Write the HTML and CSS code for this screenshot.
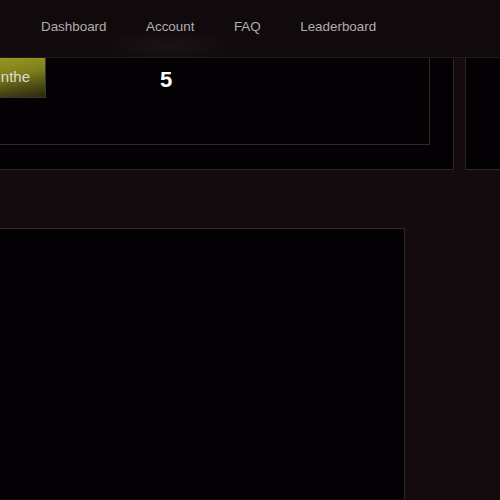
FILE: index.html
```html
<!DOCTYPE html>
<html>
<head>
<meta charset="utf-8">
<link rel="stylesheet" href="styles.css">
</head>
<body>
<header class="topbar">
  <nav class="nav">
    <a class="nav-link" href="#">Dashboard</a>
    <a class="nav-link" href="#">Account</a>
    <a class="nav-link" href="#">FAQ</a>
    <a class="nav-link" href="#">Leaderboard</a>
  </nav>
</header>
<main class="main">
  <section class="top-row">
    <div class="panel panel-a">
      <div class="inner">
        <div class="inner-row">
          <button class="btn">nthe</button>
          <span class="count">5</span>
        </div>
      </div>
    </div>
    <div class="panel panel-b"></div>
  </section>
  <section class="bottom-row">
    <div class="panel panel-c"></div>
  </section>
</main>
</body>
</html>
```
FILE: styles.css
```css
html, body {
  margin: 0;
  padding: 0;
  height: 100%;
  overflow: hidden;
}
body {
  background: #130b0d;
  font-family: "Liberation Sans", Arial, sans-serif;
}
.topbar {
  height: 57px;
  background: radial-gradient(ellipse 70px 18px at 168px 46px, #1a1416 0%, rgba(26,20,22,0) 100%), #100a0c;
  border-bottom: 1px solid #231c1e;
  display: flex;
  align-items: center;
}
.nav {
  display: flex;
  gap: 39.5px;
  padding-left: 41px;
  margin-top: -5px;
}
.nav-link {
  color: #b3adaf;
  font-size: 13.4px;
  text-decoration: none;
}
.main {
  display: flex;
  flex-direction: column;
}
.top-row {
  display: flex;
  gap: 11px;
  height: 112px;
}
.panel {
  background: #030103;
  box-sizing: border-box;
}
.panel-a {
  width: 454px;
  padding: 0 23px 24px 0;
  border-right: 1px solid #2a2527;
  border-bottom: 1px solid #2a2527;
}
.panel-b {
  flex: 1;
  border-left: 1px solid #2a2527;
  border-bottom: 1px solid #2a2527;
}
.inner {
  height: 100%;
  box-sizing: border-box;
  border-right: 1px solid #2e2a2c;
  border-bottom: 1px solid #2e2a2c;
}
.inner-row {
  display: flex;
  align-items: flex-start;
}
.btn {
  width: 46px;
  height: 40px;
  box-sizing: border-box;
  padding: 0 15px 2px 0;
  text-align: right;
  border: 1px solid #3a3834;
  border-left: none;
  border-top: none;
  background: linear-gradient(170deg, #989822 0%, #7e7e1b 40%, #4a4814 75%, #2a2810 100%);
  color: #dcdcd4;
  font-family: "Liberation Sans", Arial, sans-serif;
  font-size: 15px;
  overflow: hidden;
  white-space: nowrap;
}
.count {
  margin-left: 114px;
  margin-top: 9px;
  color: #ffffff;
  font-size: 22px;
  font-weight: bold;
}
.bottom-row {
  padding-top: 58px;
}
.panel-c {
  width: 405px;
  height: 271px;
  border-top: 1px solid #2e292b;
  border-right: 1px solid #2e292b;
}
```
